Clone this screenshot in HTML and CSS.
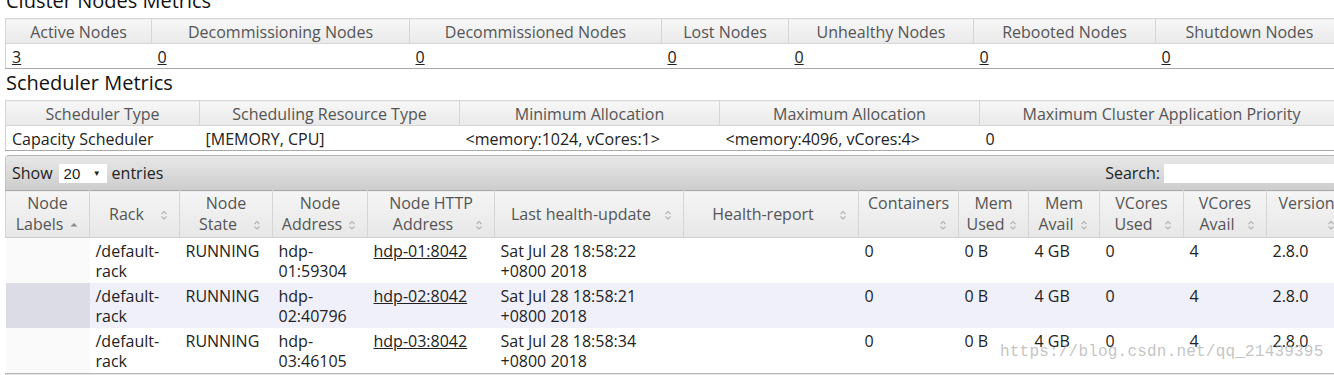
FILE: index.html
```html
<!DOCTYPE html>
<html>
<head>
<meta charset="utf-8">
<title>Nodes of the cluster</title>
<link rel="stylesheet" href="styles.css">
</head>
<body>
<div class="page">
	<h3 class="title">Cluster Nodes Metrics</h3>
	<table class="metrics">
		<colgroup><col style="width:146px"><col style="width:258px"><col style="width:252px"><col style="width:127px"><col style="width:185px"><col style="width:182px"><col style="width:188px"></colgroup>
		<thead>
			<tr><th>Active Nodes</th><th>Decommissioning Nodes</th><th>Decommissioned Nodes</th><th>Lost Nodes</th><th>Unhealthy Nodes</th><th>Rebooted Nodes</th><th>Shutdown Nodes</th></tr>
		</thead>
		<tbody>
			<tr><td><a href="#">3</a></td><td><a href="#">0</a></td><td><a href="#">0</a></td><td><a href="#">0</a></td><td><a href="#">0</a></td><td><a href="#">0</a></td><td><a href="#">0</a></td></tr>
		</tbody>
	</table>

	<h3 class="title second">Scheduler Metrics</h3>
	<table class="metrics sched">
		<colgroup><col style="width:194px"><col style="width:260px"><col style="width:260px"><col style="width:260px"><col style="width:364px"></colgroup>
		<thead>
			<tr><th>Scheduler Type</th><th>Scheduling Resource Type</th><th>Minimum Allocation</th><th>Maximum Allocation</th><th>Maximum Cluster Application Priority</th></tr>
		</thead>
		<tbody>
			<tr><td>Capacity Scheduler</td><td>[MEMORY, CPU]</td><td>&lt;memory:1024, vCores:1&gt;</td><td>&lt;memory:4096, vCores:4&gt;</td><td>0</td></tr>
		</tbody>
	</table>

	<div class="nodes">
		<div class="toolbar">
			<div class="length">Show <span class="select">20<i>&#9660;</i></span> entries</div>
			<div class="search">Search: <span class="input"></span></div>
		</div>
		<table class="grid">
			<colgroup><col style="width:84px"><col style="width:90px"><col style="width:93px"><col style="width:95px"><col style="width:127px"><col style="width:189px"><col style="width:175px"><col style="width:100px"><col style="width:70px"><col style="width:71px"><col style="width:84px"><col style="width:83px"><col style="width:80px"></colgroup>
			<thead>
				<tr>
					<th><div class="wrap">Node Labels <span class="sort"><svg width="16" height="16" viewBox="0 0 16 16"><path d="M4.5 9.5 L8 6 L11.5 9.5 Z" fill="#8a8a8a"/></svg></span></div></th>
					<th><div class="wrap">Rack <span class="sort"><svg width="16" height="16" viewBox="0 0 16 16"><path d="M5.5 7 L8 4.5 L10.5 7 M5.5 9.5 L8 12 L10.5 9.5" fill="none" stroke="#b4b4b4" stroke-width="1.2"/></svg></span></div></th>
					<th><div class="wrap">Node State <span class="sort"><svg width="16" height="16" viewBox="0 0 16 16"><path d="M5.5 7 L8 4.5 L10.5 7 M5.5 9.5 L8 12 L10.5 9.5" fill="none" stroke="#b4b4b4" stroke-width="1.2"/></svg></span></div></th>
					<th><div class="wrap">Node Address <span class="sort"><svg width="16" height="16" viewBox="0 0 16 16"><path d="M5.5 7 L8 4.5 L10.5 7 M5.5 9.5 L8 12 L10.5 9.5" fill="none" stroke="#b4b4b4" stroke-width="1.2"/></svg></span></div></th>
					<th><div class="wrap">Node HTTP Address <span class="sort"><svg width="16" height="16" viewBox="0 0 16 16"><path d="M5.5 7 L8 4.5 L10.5 7 M5.5 9.5 L8 12 L10.5 9.5" fill="none" stroke="#b4b4b4" stroke-width="1.2"/></svg></span></div></th>
					<th><div class="wrap">Last health-update <span class="sort"><svg width="16" height="16" viewBox="0 0 16 16"><path d="M5.5 7 L8 4.5 L10.5 7 M5.5 9.5 L8 12 L10.5 9.5" fill="none" stroke="#b4b4b4" stroke-width="1.2"/></svg></span></div></th>
					<th><div class="wrap">Health-report <span class="sort"><svg width="16" height="16" viewBox="0 0 16 16"><path d="M5.5 7 L8 4.5 L10.5 7 M5.5 9.5 L8 12 L10.5 9.5" fill="none" stroke="#b4b4b4" stroke-width="1.2"/></svg></span></div></th>
					<th><div class="wrap">Containers <span class="sort"><svg width="16" height="16" viewBox="0 0 16 16"><path d="M5.5 7 L8 4.5 L10.5 7 M5.5 9.5 L8 12 L10.5 9.5" fill="none" stroke="#b4b4b4" stroke-width="1.2"/></svg></span></div></th>
					<th><div class="wrap">Mem Used <span class="sort"><svg width="16" height="16" viewBox="0 0 16 16"><path d="M5.5 7 L8 4.5 L10.5 7 M5.5 9.5 L8 12 L10.5 9.5" fill="none" stroke="#b4b4b4" stroke-width="1.2"/></svg></span></div></th>
					<th><div class="wrap">Mem Avail <span class="sort"><svg width="16" height="16" viewBox="0 0 16 16"><path d="M5.5 7 L8 4.5 L10.5 7 M5.5 9.5 L8 12 L10.5 9.5" fill="none" stroke="#b4b4b4" stroke-width="1.2"/></svg></span></div></th>
					<th><div class="wrap">VCores Used <span class="sort"><svg width="16" height="16" viewBox="0 0 16 16"><path d="M5.5 7 L8 4.5 L10.5 7 M5.5 9.5 L8 12 L10.5 9.5" fill="none" stroke="#b4b4b4" stroke-width="1.2"/></svg></span></div></th>
					<th><div class="wrap">VCores Avail <span class="sort"><svg width="16" height="16" viewBox="0 0 16 16"><path d="M5.5 7 L8 4.5 L10.5 7 M5.5 9.5 L8 12 L10.5 9.5" fill="none" stroke="#b4b4b4" stroke-width="1.2"/></svg></span></div></th>
					<th><div class="wrap">Version <span class="sort"><svg width="16" height="16" viewBox="0 0 16 16"><path d="M5.5 7 L8 4.5 L10.5 7 M5.5 9.5 L8 12 L10.5 9.5" fill="none" stroke="#b4b4b4" stroke-width="1.2"/></svg></span></div></th>
				</tr>
			</thead>
			<tbody>
				<tr class="odd"><td class="sorted"></td><td>/default-rack</td><td>RUNNING</td><td>hdp-01:59304</td><td><a href="#">hdp-01:8042</a></td><td>Sat Jul 28 18:58:22 +0800 2018</td><td></td><td>0</td><td>0 B</td><td>4 GB</td><td>0</td><td>4</td><td>2.8.0</td></tr>
				<tr class="even"><td class="sorted"></td><td>/default-rack</td><td>RUNNING</td><td>hdp-02:40796</td><td><a href="#">hdp-02:8042</a></td><td>Sat Jul 28 18:58:21 +0800 2018</td><td></td><td>0</td><td>0 B</td><td>4 GB</td><td>0</td><td>4</td><td>2.8.0</td></tr>
				<tr class="odd"><td class="sorted"></td><td>/default-rack</td><td>RUNNING</td><td>hdp-03:46105</td><td><a href="#">hdp-03:8042</a></td><td>Sat Jul 28 18:58:34 +0800 2018</td><td></td><td>0</td><td>0 B</td><td>4 GB</td><td>0</td><td>4</td><td>2.8.0</td></tr>
			</tbody>
		</table>
		<div class="toolbar bottom"></div>
	</div>
</div>
<div class="watermark">https://blog.csdn.net/qq_21439395</div>
</body>
</html>
```

FILE: styles.css
```css
*{ margin:0; padding:0; }
body{ font-family:"Open Sans","Noto Sans",sans-serif; font-size:16px; color:#222; background:#fff; overflow:hidden; }
a{ color:#222; text-decoration:underline; }

.page{ margin-top:-11px; padding-left:5px; }
.title{ font-size:20px; font-weight:normal; line-height:24px; padding-left:1px; color:#111; }
.title.second{ margin-top:2px; }

.metrics{ width:1338px; table-layout:fixed; border-collapse:collapse; margin-top:5px; }
.metrics th{ height:24px; padding-top:2px; line-height:22px; box-sizing:border-box; font-weight:normal; color:#555; text-align:center; white-space:nowrap; overflow:hidden; background:linear-gradient(#f7f7f7,#e9e9e9); border:1px solid #d6d6d6; border-left:0; }
.metrics th:first-child{ border-left:1px solid #d6d6d6; }
.metrics td{ height:24px; padding:2px 6px 0; line-height:22px; box-sizing:border-box; white-space:nowrap; border-bottom:1px solid #a9a9a9; }
.metrics td:first-child{ border-left:1px solid #d0d0d0; }
.sched th{ height:25px; }

.nodes{ margin-top:4px; width:1341px; }
.toolbar{ height:34px; display:flex; align-items:center; justify-content:space-between; padding:0 0 0 6px; border-top:1px solid #b5b5b5; border-left:1px solid #c4c4c4; border-radius:4px 0 0 0; background:linear-gradient(#e8e8e8,#cdcdcd); color:#222; }
.toolbar.bottom{ height:8px; border-radius:0; }
.length{ display:flex; align-items:center; }
.select{ display:inline-flex; align-items:center; justify-content:space-between; width:48px; height:19px; margin:0 5px 0 6px; padding:0 6px 0 5px; box-sizing:border-box; background:#fff; font-size:15px; font-family:"Liberation Sans",Arial,sans-serif; }
.select i{ font-style:normal; font-size:8px; color:#222; }
.search{ display:flex; align-items:center; }
.input{ display:inline-block; width:182px; height:19px; margin-left:4px; background:#fff; }

.grid{ width:1341px; table-layout:fixed; border-collapse:collapse; }
.grid th{ padding:2px 7px; line-height:21px; font-weight:normal; color:#555; vertical-align:middle; background:linear-gradient(#f5f5f5,#e7e7e7); border-right:1px solid #d6d6d6; border-bottom:1px solid #cfcfcf; border-top:1px solid #a8a8a8; }
.grid th:first-child{ border-left:1px solid #d6d6d6; }
.wrap{ text-align:center; }
.sort{ float:right; width:16px; height:21px; padding-top:3px; box-sizing:border-box; }
.sort svg{ display:block; }
.grid td{ height:45px; box-sizing:border-box; padding:3px 6px 0; line-height:20px; vertical-align:top; color:#222; }
.grid tr.odd td{ background:#fff; }
.grid tr.odd td.sorted{ background:#fafafa; }
.grid tr.even td{ background:#f0f0fb; }
.grid tr.even td.sorted{ background:#dcdce6; }

.watermark{ position:absolute; left:1000px; top:343px; font-family:"Liberation Mono",monospace; font-size:16px; letter-spacing:0.2px; color:rgba(170,170,170,0.7); pointer-events:none; }
```
